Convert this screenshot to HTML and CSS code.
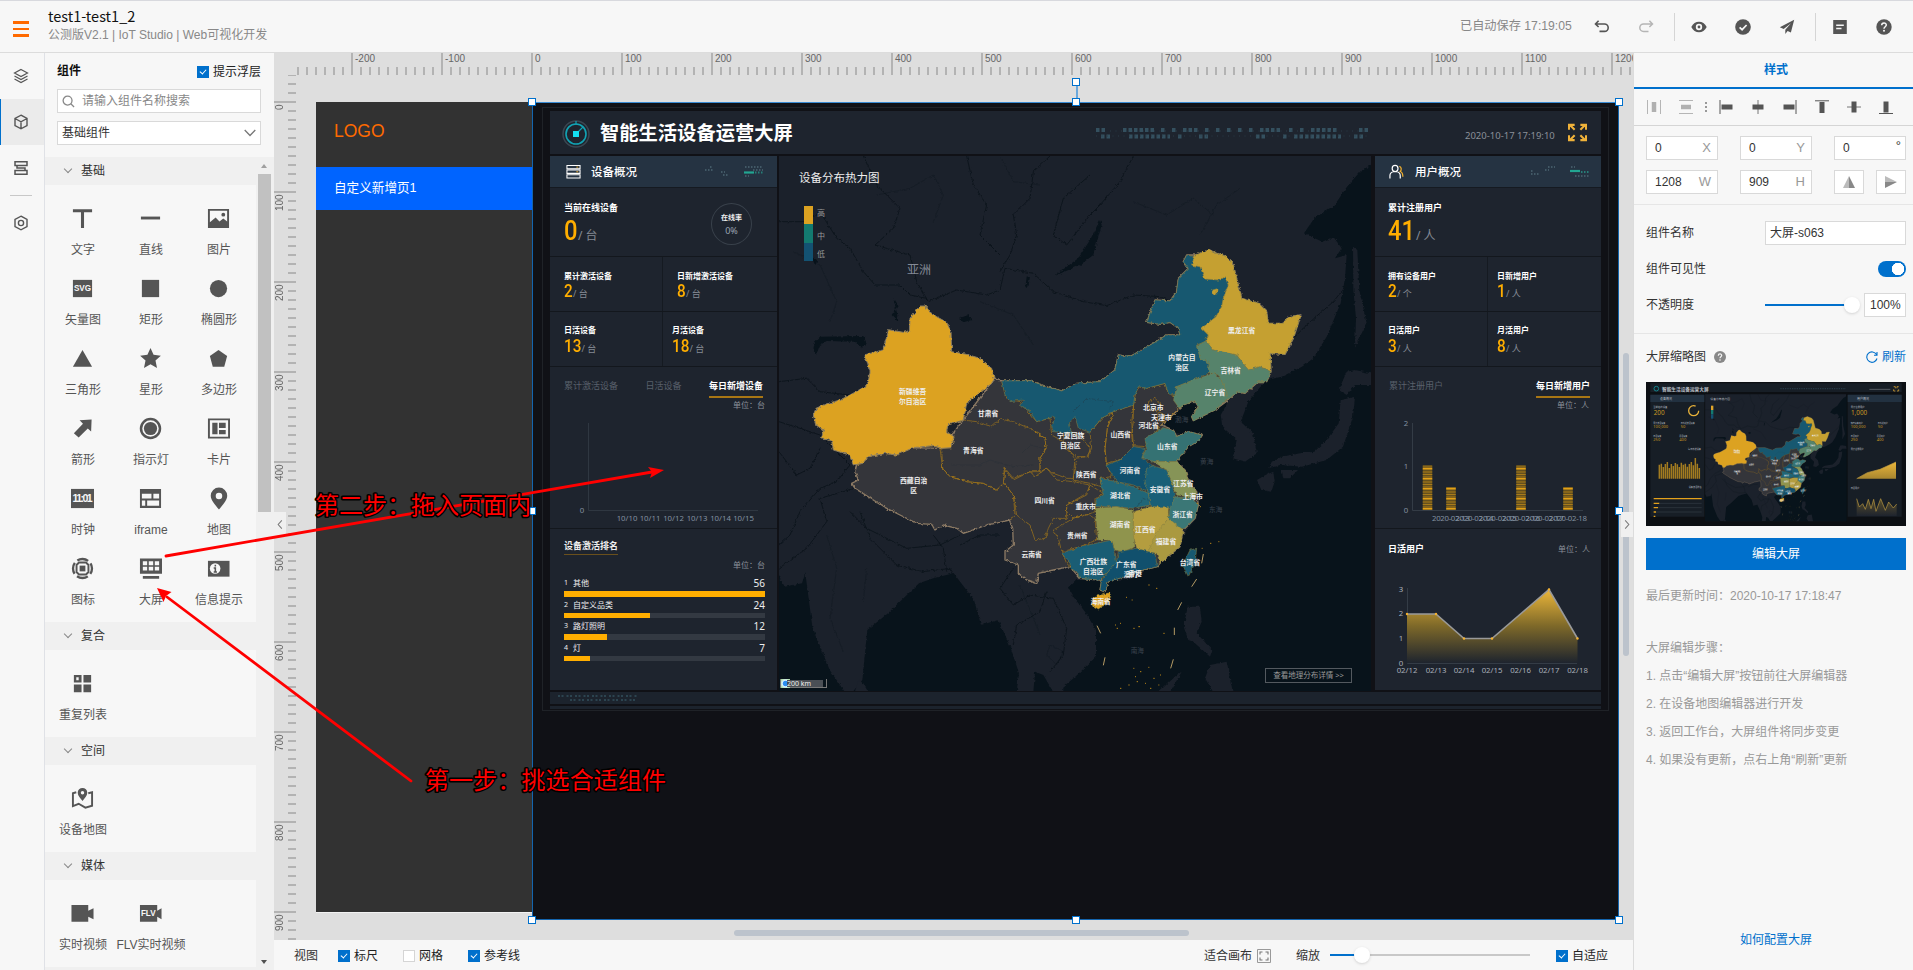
FILE: index.html
```html
<!DOCTYPE html>
<html lang="zh-CN">
<head>
<meta charset="utf-8">
<title>test1-test1_2</title>
<link rel="stylesheet" href="styles.css">
</head>
<body>
<svg class="defs" aria-hidden="true">
  <defs>
    <filter id="rough" x="-5%" y="-5%" width="110%" height="110%" color-interpolation-filters="sRGB"><feTurbulence type="fractalNoise" baseFrequency="0.1" numOctaves="3" seed="4"/><feDisplacementMap in="SourceGraphic" scale="10" xChannelSelector="R" yChannelSelector="G"/></filter>
    <linearGradient id="area" x1="0" y1="0" x2="0" y2="1"><stop offset="0" stop-color="#ebb63a"/><stop offset=".5" stop-color="#7d6829"/><stop offset="1" stop-color="#1e242e"/></linearGradient>
    <g id="terrain">
      <rect x="-63" y="-237" width="1776" height="1605" fill="#1b212b"/>
      <g filter="url(#rough)">
        <path fill="#08131b" d="M1720-215 1680-190 1641-145 1604-90 1543-50 1512-5 1567 20 1600 5 1625 40 1605 70 1640 60 1635 130 1622 205 1580 305 1540 370 1506 395 1445 425 1402 435 1345 475 1290 495 1220 540 1180 555 1195 510 1160 500 1130 530 1085 570 1115 590 1150 600 1205 600 1150 650 1130 680 1160 720 1195 790 1190 850 1155 890 1130 940 1075 985 1000 1030 910 1040 870 1035 830 1035 805 1060 820 1085 855 1130 888 1185 888 1265 826 1325 790 1355 790 1372 1720 1372Z"/>
        <path fill="#08131b" d="M-70 1010-46 1055 6 1045 16 1015 37 1175 89 1305 135 1372H-70ZM160 1372 187 1335 202 1185 264 1135 357 1045 400 1030 461 1015 522 1095 543 1170 595 1155 631 1235 657 1315 650 1372ZM700 1372 705 1310 730 1320 760 1372Z"/>
        <path fill="#08131b" d="M900-45 905-30 880 60 840 90 765 122 780 110 835 70 870 15ZM45 320 60 305 190 303 200 325 185 340 165 320 80 318 60 330 48 360 40 345ZM290 230 280 190 295 210 275 240 295 262ZM680 125 690 123 685 155 676 160ZM478 250 505 240 515 255 490 262ZM35 65 55 80 45 90Z"/>
        <path fill="#1b212b" d="M1402 430 1345 500 1322 560 1359 595 1371 655 1335 680 1298 670 1310 615 1267 575 1262 540 1290 490ZM1665 485 1659 545 1629 635 1580 675 1506 695 1440 690 1408 700 1415 680 1445 665 1500 655 1543 650 1580 615 1616 565 1622 495ZM1396 720 1420 710 1424 740 1414 770 1384 765 1371 735ZM1445 705 1494 705 1470 730 1450 730ZM1616 465 1640 410 1665 405 1713 415 1720 450 1665 450 1640 480ZM1659 35 1672 45 1678 165 1700 265 1665 335 1668 250 1660 165ZM1163 1115 1200 1115 1205 1160 1190 1195 1237 1245 1230 1265 1180 1220 1165 1215 1151 1175ZM1230 1290 1280 1280 1298 1372 1240 1372 1215 1330ZM1075 1372 1130 1320 1145 1310 1110 1372ZM165 1372 175 1335 190 1345 205 1372Z"/>
        <path class="borderline" d="M-63-40 20-40 60-70 110 10 150 40 190 110 225 150 300 150 330 180 380 190 M190-237 230-150 300-80 280-20 225 30 330 60 350 140 385 200 M385 200 470 165 560 180 600 165 615 100 700 115 760 170 850 200 920 212 1000 180 1080 185 1110 198 M500-237 520-150 560-90 540 0 600 60 M750-237 700-190 690-110 640-60 650 0 630 60 600 110 M1000-237 960-160 900-90 870-60 800 30 760 0 790-110 870-180 M1460 330 1520 270 1600 200 1640 150 M-63 440 20 430 60 470 150 480 M-63 560 0 580 60 600 150 690 110 740 60 760 0 830-30 900-63 930 M165 760 60 790 80 860 20 940-63 1000 M150 830 200 880 320 940 420 930 480 900 M180 830 210 910 290 990 370 1010 450 1000 500 1080 540 1150 M400 900 430 940 440 1010 M480 930 540 900 600 900 M640 1000 600 1060 640 1110 690 1080 760 1090 800 1180 790 1260 750 1310 M740 1070 720 1130 650 1170 640 1230 M-63 650-10 720 30 700 60 640"/>
        <path class="borderline faint" d="M-20 50 60 90 110 200 90 260 M230-120 330-140 400-180 430-120 400-40 M600-237 640-160 720-150 M540 200 640 240 700 330 M80 900 110 1000 90 1150 130 1250 M200 1000 190 1100 M1000-100 1100-60 1180-110 1240-60 M1200 0 1250-90 1320-140 M660 1050 720 1200 M750 1230 790 1250 770 1290 740 1260Z"/>
      </g>
      <text class="sea" x="1035" y="494" font-size="24">北京</text>
      <text class="sea" x="1125" y="560" font-size="20">渤海</text>
      <text class="sea" x="1200" y="688" font-size="20">黄海</text>
      <text class="sea" x="1227" y="832" font-size="20">东海</text>
      <text class="sea" x="992" y="1255" font-size="20">南海</text>
    </g>
    <g id="china">
      <g filter="url(#rough)" stroke-linejoin="round">
        <path class="outer" d="M170 690 205 665 340 638 425 640 583 432 605 438 690 437 740 455 785 468 830 445 900 440 945 405 955 360 990 365 1060 325 1100 300 1140 300 1135 280 1110 262 1080 268 1040 262 1065 195 1110 198 1130 170 1135 130 1165 100 1150 80 1160 60 1185 60 1225 45 1280 65 1300 90 1325 190 1375 205 1400 230 1405 265 1450 265 1465 245 1503 240 1480 310 1455 358 1410 355 1413 410 1400 440 1375 440 1335 475 1310 470 1285 495 1245 525 1180 557 1175 545 1195 515 1185 497 1150 510 1085 570 1120 585 1130 605 1165 590 1205 600 1200 615 1165 635 1130 680 1155 705 1168 745 1190 770 1195 810 1185 850 1150 885 1140 935 1110 960 1080 985 1072 995 1030 1005 925 1040 915 1070 900 1065 905 1035 840 1030 810 995 760 1005 715 1015 710 1045 680 1035 655 1015 655 990 615 975 615 950 640 930 638 880 628 855 600 862 560 870 520 885 490 895 470 880 430 870 405 885 395 868 350 865 300 840 250 815 220 795 165 760 155 745 175 735 165 710Z"/>
        <g class="grey">
          <path d="M170 690 188 685 205 665 250 655 290 660 340 638 400 632 420 640 428 700 450 725 500 740 550 745 590 765 612 745 640 780 645 840 628 855"/>
          <path d="M425 640 455 638 462 605 440 590 443 570 490 555 530 560 575 575 600 552 640 560 700 585 735 610 738 640 720 670 720 710 690 710 640 730 615 700 610 745 590 765 550 745 500 740 450 725 428 700Z"/>
          <path d="M605 438 620 490 660 500 675 520 710 560 750 550 755 600 790 620 810 650 830 680 820 730 800 730 760 715 740 700 720 710 720 670 738 640 735 610 700 585"/>
          <path d="M1005 480 1015 455 1040 460 1095 445 1105 475 1125 485 1138 520 1100 555 1085 570 1060 600 1035 635 1000 632 995 560Z"/>
          <path d="M1045 500 1065 490 1085 510 1070 530 1050 525ZM1075 530 1095 540 1090 562 1072 555Z"/>
          <path d="M940 530 1000 510 1000 560 995 600 1000 640 960 675 918 685 915 640 922 580Z"/>
          <path d="M905 550 940 532 922 580 915 640 920 690 935 725 900 730 905 755 870 745 820 735 825 670 860 665 875 640 870 592Z"/>
          <path d="M790 600 815 590 850 615 870 640 865 665 830 665 795 640Z"/>
          <path d="M612 700 640 735 690 710 705 725 740 700 770 735 820 740 870 750 860 780 800 810 800 850 760 850 745 880 735 910 705 915 690 870 650 840 640 780 612 745Z"/>
          <path d="M870 750 910 775 885 790 885 830 860 840 820 850 800 830 800 810 860 775Z"/>
          <path d="M760 885 820 850 860 838 885 850 890 915 840 935 785 950 775 910Z"/>
          <path d="M785 950 800 985 810 995"/>
        </g>
        <path fill="#dca221" stroke="#8a7d62" stroke-width="3" d="M378 213 360 213 352 222 330 250 328 288 310 292 265 284 262 300 248 345 230 350 192 360 203 385 210 410 205 440 195 455 150 480 120 495 75 508 48 520 40 540 48 570 70 585 65 608 95 618 100 645 148 660 160 690 188 685 205 665 250 655 290 660 340 638 400 632 425 640 455 638 462 605 440 590 443 570 490 555 500 505 545 470 575 445 583 432 575 400 540 370 500 358 455 350 453 290 440 262 410 245 385 228Z"/>
        <g class="prov">
          <path fill="#175870" d="M605 438 690 437 740 455 785 468 830 445 900 440 945 405 955 360 990 365 1060 325 1100 300 1140 300 1135 280 1110 262 1080 268 1040 262 1065 195 1110 198 1130 170 1135 130 1165 100 1150 80 1160 60 1185 65 1175 90 1200 95 1215 132 1260 135 1275 125 1285 150 1270 190 1265 215 1248 245 1205 280 1225 300 1215 320 1190 330 1200 370 1228 385 1225 415 1180 435 1130 455 1125 480 1105 475 1095 445 1040 460 1015 455 1005 480 1000 510 940 530 905 550 870 592 835 580 825 545 808 565 815 595 760 590 755 575 765 545 710 560 690 530 660 510 670 495 630 500 615 480Z"/>
          <path fill="#c5a031" d="M1185 60 1225 45 1280 65 1300 90 1325 190 1375 205 1400 230 1405 265 1450 265 1465 245 1503 240 1480 310 1455 358 1410 355 1413 410 1380 395 1345 405 1310 360 1240 345 1218 318 1225 300 1205 280 1248 245 1265 215 1270 190 1285 150 1275 125 1260 135 1215 132 1200 95 1175 90ZM1235 166 1251 161 1251 177 1237 179Z"/>
          <path fill="#56836b" d="M1190 332 1218 318 1240 345 1310 360 1345 405 1380 395 1413 410 1400 440 1375 440 1335 475 1310 470 1285 495 1270 450 1255 420 1225 412 1228 385 1200 370Z"/>
          <path fill="#56836b" d="M1125 480 1130 455 1180 435 1240 415 1255 425 1272 450 1285 492 1245 525 1180 557 1175 545 1195 515 1185 497 1150 510 1138 520 1120 495Z"/>
          <path fill="#357273" d="M1035 610 1090 578 1120 585 1130 605 1165 590 1205 600 1200 615 1165 635 1130 680 1060 680 1025 668 1040 640Z"/>
          <path fill="#11506d" d="M1000 635 1035 640 1025 670 1060 690 1040 720 1045 770 1000 750 950 740 918 690 960 675Z"/>
          <path fill="#869457" d="M1060 680 1130 680 1155 705 1168 745 1190 770 1185 790 1130 780 1115 740 1100 705Z"/>
          <path fill="#195f77" d="M1040 700 1060 692 1100 705 1115 740 1125 785 1115 820 1080 825 1050 810 1045 775 1035 740Z"/>
          <path fill="#206678" d="M900 730 950 740 1000 755 1045 775 1050 810 1000 820 950 815 885 815 890 790 910 780Z"/>
          <path fill="#3b7776" d="M1125 785 1175 790 1195 810 1185 850 1155 880 1120 885 1105 850 1110 820Z"/>
          <path fill="#8f944d" d="M885 820 950 815 1000 825 1000 880 1005 935 970 950 945 945 935 915 895 915 890 870Z"/>
          <path fill="#b49d3f" d="M1000 830 1050 815 1105 815 1105 850 1065 905 1050 955 1010 940 1000 900Z"/>
          <path fill="#aa9940" d="M1105 850 1150 885 1140 935 1110 960 1080 985 1070 955 1045 950 1065 900Z"/>
          <path fill="#1a5d74" d="M785 955 840 935 935 915 945 950 950 985 925 1010 900 1035 840 1030 830 1010 810 1000 810 985Z"/>
          <path fill="#11506d" d="M955 950 1010 940 1065 955 1072 995 1030 1005 990 1020 925 1040 915 1070 900 1065 905 1035 925 1010 950 980Z"/>
          <path fill="#dca221" d="M880 1085 930 1073 932 1085 920 1105 895 1122 875 1110Z"/>
          <path fill="#175870" d="M1170 945 1190 940 1185 985 1165 1025 1148 990Z"/>
        </g>
        <path class="river" d="M455 690 540 690 570 675 640 695 700 690 M820 530 860 490 940 500 930 520 M660 660 690 630 730 640 M1000 830 1030 790 1050 800"/>
      </g>
      <path class="dash" d="M1210 957 1205 985M1190 1032 1175 1055M1145 1102 1133 1125M1123 1178V1200M891 1172 902 1195M915 1267 910 1291M1120 1273 1112 1300"/>
      <path class="dots" d="M945 1170h3M960 1165h3M950 1180h4M1000 1180h4M1015 1175h5M1045 1050h4M1068 1060h4M995 1095h3M978 1087h3M1090 1195h4M1230 925h4M1255 920h3M1205 940h3M1000 1300h3M1020 1310h4M1045 1297h3M1060 1330h4M1010 1340h4M1035 1345h3M985 1350h4M1080 1320h3M1075 1350h3M960 1360h4M1050 1360h4M1005 1325h3M1190 805h4M1200 815h3"/>
      <g class="lab">
        <text x="338" y="476">新疆维吾</text><text x="338" y="507">尔自治区</text><text x="564" y="544">甘肃省</text><text x="520" y="655">青海省</text><text x="341" y="744">西藏自治</text><text x="341" y="774">区</text><text x="734" y="804">四川省</text><text x="812" y="609">宁夏回族</text><text x="811" y="639">自治区</text><text x="859" y="725">陕西省</text><text x="962" y="606">山西省</text><text x="1060" y="525">北京市</text><text x="1084" y="555">天津市</text><text x="1046" y="579">河北省</text><text x="1102" y="641">山东省</text><text x="990" y="714">河南省</text><text x="1080" y="771">安徽省</text><text x="1150" y="754">江苏省</text><text x="1178" y="793">上海市</text><text x="961" y="790">湖北省</text><text x="857" y="822">重庆市</text><text x="1148" y="846">浙江省</text><text x="960" y="876">湖南省</text><text x="1036" y="890">江西省</text><text x="1098" y="928">福建省</text><text x="832" y="908">贵州省</text><text x="695" y="965">云南省</text><text x="880" y="987">广西壮族</text><text x="880" y="1017">自治区</text><text x="979" y="995">广东省</text><text x="992" y="1027">澳门</text><text x="1005" y="1024">香港</text><text x="902" y="1106">海南省</text><text x="1170" y="989">台湾省</text><text x="1325" y="293">黑龙江省</text><text x="1146" y="375">内蒙古自</text><text x="1146" y="406">治区</text><text x="1292" y="414">吉林省</text><text x="1245" y="479">辽宁省</text>
      </g>
    </g>
  </defs>
</svg>

<header class="topbar">
  <div class="burger"><i></i><i></i><i></i></div>
  <div class="titles"><div class="name">test1-test1_2</div><div class="sub">公测版V2.1 | IoT Studio | Web可视化开发</div></div>
  <div class="tools">
    <span class="saved">已自动保存 17:19:05</span>
    <svg class="tool" viewBox="0 0 16 16"><path d="M1.500 5H10.500a3.700 3.700 0 0 1 0 7.400H5.500M4.600 1.800 1.500 5l3.100 3" fill="none" stroke="#555" stroke-width="1.600"/></svg>
    <svg class="tool" viewBox="0 0 16 16"><path d="M14.500 5H5.500a3.700 3.700 0 0 0 0 7.400H10.500M11.400 1.800 14.500 5l-3.100 3" fill="none" stroke="#b5b5b5" stroke-width="1.500"/></svg>
    <i class="sep"></i>
    <svg class="tool" viewBox="0 0 16 16"><path fill="#555" fill-rule="evenodd" d="M.3 8C2 4.500 4.800 2.800 8 2.800S14 4.500 15.700 8C14 11.500 11.200 13.200 8 13.200S2 11.500.3 8ZM8 4.800a3.200 3.200 0 1 0 0 6.400 3.200 3.200 0 0 0 0-6.400Z"/><circle cx="8" cy="8" r="1.400" fill="#555"/></svg>
    <svg class="tool" viewBox="0 0 16 16"><circle cx="8" cy="8" r="7.800" fill="#555"/><path d="M4.600 8.300 7.100 10.700 11.600 6" fill="none" stroke="#f7f7f7" stroke-width="1.700"/></svg>
    <svg class="tool" viewBox="0 0 16 16"><path fill="#555" d="M15.200.8.8 8.200 4.700 10 12 4.200 6.300 10.700V15L8.600 12 11.900 13.400Z"/></svg>
    <i class="sep"></i>
    <svg class="tool" viewBox="0 0 16 16"><path fill="#555" d="M1.200 1H14.800V15H1.200Z"/><path d="M4.200 6.200H11.800M4.200 9.500H9.500" stroke="#f7f7f7" stroke-width="1.400"/></svg>
    <svg class="tool" viewBox="0 0 16 16"><circle cx="8" cy="8" r="7.700" fill="#555"/><path d="M5.700 6.300C5.700 3.200 10.300 3.200 10.300 6.100 10.300 7.700 8 7.800 8 9.700" fill="none" stroke="#f7f7f7" stroke-width="1.500"/><circle cx="8" cy="11.800" r="1" fill="#f7f7f7"/></svg>
  </div>
</header>

<main class="main">
  <nav class="rail">
    <div class="rail-item"><svg viewBox="0 0 16 16"><path d="M8 1.500 14.500 5 8 8.500 1.500 5ZM1.500 8 8 11.500 14.500 8M1.500 11 8 14.500 14.500 11" fill="none" stroke="#555" stroke-width="1.200"/></svg></div>
    <div class="rail-item on"><svg viewBox="0 0 16 16"><path d="M8 1.200 14 4.500V11.500L8 14.800 2 11.500V4.500ZM2 4.500 8 7.800 14 4.500M8 7.800V14.800" fill="none" stroke="#555" stroke-width="1.400"/></svg></div>
    <div class="rail-item"><svg viewBox="0 0 16 16"><path d="M2 1.800H14V5.400H2ZM2 10.600H14V14.200H2ZM4 5.400V8H12V10.600" fill="none" stroke="#555" stroke-width="1.500"/></svg></div>
    <i class="rail-line"></i>
    <div class="rail-item last"><svg viewBox="0 0 16 16"><path d="M8 1.200 14 4.500V11.500L8 14.800 2 11.500V4.500Z" fill="none" stroke="#555" stroke-width="1.400"/><circle cx="8" cy="8" r="2.600" fill="none" stroke="#555" stroke-width="1.400"/></svg></div>
  </nav>

  <aside class="comps">
    <div class="comps-top">
      <div class="comps-title"><b>组件</b><label><i class="cb on"></i>提示浮层</label></div>
      <div class="field search"><svg viewBox="0 0 14 14"><circle cx="6" cy="6" r="4.800" fill="none" stroke="#888" stroke-width="1.400"/><path d="M9.500 9.500 13 13" stroke="#888" stroke-width="1.400"/></svg><span>请输入组件名称搜索</span></div>
      <div class="field select"><span>基础组件</span><svg viewBox="0 0 12 8"><path d="M.7 1 6 6.500 11.300 1" fill="none" stroke="#777" stroke-width="1.300"/></svg></div>
    </div>
    <div class="scroll">
      <div class="list">
        <h4><i></i>基础</h4>
        <div class="grid">
          <div><svg viewBox="0 0 24 24"><path d="M2 4H22M12 4V22" stroke="#555" stroke-width="3.200"/></svg>文字</div>
          <div><svg viewBox="0 0 24 24"><path d="M2 11.500H22" stroke="#555" stroke-width="3"/></svg>直线</div>
          <div><svg viewBox="0 0 24 24"><path fill="#555" fill-rule="evenodd" d="M1 2H23V22H1ZM3 4V16L9 11 13 15 17 12 21 15V4Z"/><circle cx="17" cy="8" r="2" fill="#555"/></svg>图片</div>
          <div><svg viewBox="0 0 24 24"><path fill="#555" d="M2 3H22V21H2Z"/><text x="12" y="15" class="glyph" font-size="8.500">SVG</text></svg>矢量图</div>
          <div><svg viewBox="0 0 24 24"><path fill="#555" d="M3 3H21V21H3Z"/></svg>矩形</div>
          <div><svg viewBox="0 0 24 24"><circle cx="12" cy="12" r="9" fill="#555"/></svg>椭圆形</div>
          <div><svg viewBox="0 0 24 24"><path fill="#555" d="M12 3 22 20.500H2Z"/></svg>三角形</div>
          <div><svg viewBox="0 0 24 24"><path fill="#555" d="M12 1 15.200 8.200 22.800 9 17.200 14.200 18.800 22 12 18 5.200 22 6.800 14.200 1.200 9 8.800 8.200Z"/></svg>星形</div>
          <div><svg viewBox="0 0 24 24"><path fill="#555" d="M12 3 21 9.500 18 20.500H6L3 9.500Z"/></svg>多边形</div>
          <div><svg viewBox="0 0 24 24"><path fill="#555" d="M9 3.500 21.500 2.500 21 15 17.500 12 8 21.500 3 17 12.500 7Z"/></svg>箭形</div>
          <div><svg viewBox="0 0 24 24"><circle cx="12" cy="12" r="9.900" fill="none" stroke="#555" stroke-width="2.600"/><circle cx="12" cy="12" r="6.900" fill="#555"/></svg>指示灯</div>
          <div><svg viewBox="0 0 24 24"><path d="M2 2.500H23V21.500H2Z" fill="none" stroke="#555" stroke-width="2"/><path fill="#555" d="M5.500 6H11V18H5.500ZM12.500 6H19.500V11.500H12.500ZM12.500 13.500H19.500V18H12.500Z"/></svg>卡片</div>
          <div><svg viewBox="0 0 24 24"><path fill="#555" d="M0 2H24V22H0Z"/><text x="12" y="16" class="glyph" font-size="11" textLength="21">11:01</text></svg>时钟</div>
          <div><svg viewBox="0 0 24 24"><path fill="#555" fill-rule="evenodd" d="M1 2H23V22H1ZM3 7V12H13V7ZM15 7V12H21V7ZM3 14V19.500H6.500V14ZM8.500 14V19.500H21V14Z"/></svg>iframe</div>
          <div><svg viewBox="0 0 24 24"><path fill="#555" fill-rule="evenodd" d="M12.500.5a8.600 8.600 0 0 1 8.600 8.600C21.100 14 16 19 12.500 23.500 9 19 3.900 14 3.900 9.100A8.600 8.600 0 0 1 12.500.5Zm0 5.400a3.400 3.400 0 1 0 0 6.800 3.400 3.400 0 0 0 0-6.800Z"/></svg>地图</div>
          <div><svg viewBox="0 0 24 24"><circle cx="12" cy="12" r="9.900" fill="none" stroke="#555" stroke-width="2.400" stroke-dasharray="12 3.550" stroke-dashoffset="6"/><path d="M8.300 5.800H15.700L18.200 8.300V15.700L15.700 18.200H8.300L5.800 15.700V8.300Z" fill="none" stroke="#555" stroke-width="2"/><path fill="#555" d="M9 9H15V15H9Z"/></svg>图标</div>
          <div><svg viewBox="0 0 24 24"><path fill="#555" fill-rule="evenodd" d="M1 1.500H24V17.500H1ZM4 4.500V8.500H8.500V4.500ZM10.200 4.500V8.500H14.800V4.500ZM16.500 4.500V8.500H21V4.500ZM4 10.300V14H8.500V10.300ZM10.200 10.300V14H14.800V10.300ZM16.500 10.300V14H21V10.300ZM4 19.800H21V22.800H4Z"/></svg>大屏</div>
          <div><svg viewBox="0 0 24 24"><path fill="#555" d="M1 4H23.500V20.500H1Z"/><circle cx="8.500" cy="12" r="5.500" fill="#f7f7f7"/><path d="M8.700 8V10M7 11.500H8.700V15.500M7 15.700H10.400" stroke="#555" stroke-width="1.600" fill="none"/></svg>信息提示</div>
        </div>
        <h4><i></i>复合</h4>
        <div class="grid"><div><svg viewBox="0 0 24 24"><path fill="#555" fill-rule="evenodd" d="M3 3H11V11H3ZM5.500 5.500V8.500H8V5.500ZM13 3H21V11H13ZM3 13H11V21H3ZM13 13H21V21H13Z"/></svg>重复列表</div></div>
        <h4><i></i>空间</h4>
        <div class="grid"><div><svg viewBox="0 0 24 24"><path d="M5.500 5.500 2 6.500V20L8 17.500 15 21.500 22 19.500V5.500L18 6.500" fill="none" stroke="#555" stroke-width="2"/><path fill="#555" fill-rule="evenodd" d="M12 1a5 5 0 0 1 5 5C17 9 14 12 12 14.500 10 12 7 9 7 6a5 5 0 0 1 5-5Zm0 3.200a1.800 1.800 0 1 0 0 3.600 1.800 1.800 0 0 0 0-3.600Z"/></svg>设备地图</div></div>
        <h4><i></i>媒体</h4>
        <div class="grid"><div><svg viewBox="0 0 24 24"><path fill="#555" d="M.5 3H18V9L23.500 6.500V18L18 15.500V20.500H.5Z"/></svg>实时视频</div><div><svg viewBox="0 0 24 24"><path fill="#555" d="M1 3H19V9L23.500 6.500V18L19 15.500V20.500H1Z"/><text x="9.700" y="15" class="glyph" font-size="8.500">FLV</text></svg>FLV实时视频</div></div>
        <h4><i></i></h4>
      </div>
      <div class="bar"><i class="up"></i><i class="thumb"></i><i class="down"></i></div>
    </div>
  </aside>

  <section class="work">
    <div class="hruler"><div class="hlabels"><span>-200</span><span>-100</span><span>0</span><span>100</span><span>200</span><span>300</span><span>400</span><span>500</span><span>600</span><span>700</span><span>800</span><span>900</span><span>1000</span><span>1100</span><span>1200</span></div></div>
    <div class="work-row">
      <div class="vruler"><span>0</span><span>100</span><span>200</span><span>300</span><span>400</span><span>500</span><span>600</span><span>700</span><span>800</span><span>900</span></div>
      <div class="canvas">
        <div class="page"><div class="logo">LOGO</div><div class="menu">自定义新增页1</div></div>
        <div class="stage">
          <div class="dash-head">
            <svg class="radar" viewBox="0 0 28 28"><circle cx="14" cy="14" r="13" fill="none" stroke="#3a4752" stroke-width="1.500"/><circle cx="14" cy="14" r="10" fill="none" stroke="#12a3b4" stroke-width="1.600"/><path d="M16 12 21 7M14 1V5" stroke="#12a3b4" stroke-width="1.200"/><path fill="#14dff2" d="M11 11H17V17H11Z"/></svg>
            <strong>智能生活设备运营大屏</strong>
            <svg class="matrix" viewBox="0 0 272 12"><path d="M0 3H9M27 3H58M65 3H69M76 3H80M87 3H102M109 3H113M120 3H124M131 3H135M142 3H146M153 3H157M164 3H185M193 3H197M204 3H208M215 3H242M263 3H272" stroke="#34505f" stroke-width="4" stroke-dasharray="3.500 2"/><path d="M5 9.500H14M33 9.500H74M82 9.500H86M103 9.500H112M160 9.500H169M187 9.500H191M198 9.500H245M258 9.500H267" stroke="#34505f" stroke-width="4" stroke-dasharray="3.500 2"/><path d="M14 4H272M0 9H272" stroke="#2a3b47" stroke-width="1" stroke-dasharray="1 4.500"/></svg>
            <time>2020-10-17 17:19:10</time>
            <svg class="full" viewBox="0 0 20 20"><path d="M1 7V2H7M2 2 7 7M13 2H19V7M18 2 13 7M1 13V18H7M2 18 7 13M13 18H19V13M18 18 13 13" fill="none" stroke="#f0b23a" stroke-width="2.200"/></svg>
          </div>
          <div class="dash-body">
            <div class="pan">
              <div class="pan-head"><svg viewBox="0 0 16 16"><path d="M1 1.500H15V5H1ZM1 6.500H15V10H1ZM1 11.500H15V15H1Z" fill="none" stroke="#fff" stroke-width="1.100"/><path d="M11 3.300H13M11 8.300H13" stroke="#f5b22f"/></svg><span>设备概况</span><svg class="deco" viewBox="0 0 58 12"><path d="M0 4H8M5 1H8M16 6H20M18 9H24M40 1H58M48 4H58M40 10H44" stroke="#4c6773" stroke-width="1.500" stroke-dasharray="1.500 1.500"/><path d="M39 6.500H49" stroke="#22a692" stroke-width="2.200"/><path d="M50 6.500H58" stroke="#277f78" stroke-width="2" stroke-dasharray="1.500 1.500"/></svg></div>
              <div class="sec hero"><div class="stat"><p>当前在线设备</p><div class="val"><b>0</b><em>/ 台</em></div></div><div class="ring"><span>在线率</span><small>0%</small></div></div>
              <div class="sec pair"><div class="stat"><p>累计激活设备</p><div class="val"><b>2</b><em>/ 台</em></div></div><div class="stat"><p>日新增激活设备</p><div class="val"><b>8</b><em>/ 台</em></div></div></div>
              <div class="sec pair low"><div class="stat"><p>日活设备</p><div class="val two"><b>13</b><em>/ 台</em></div></div><div class="stat near"><p>月活设备</p><div class="val two"><b>18</b><em>/ 台</em></div></div></div>
              <div class="sec chart">
                <div class="tabs"><span>累计激活设备</span><span>日活设备</span><span class="on">每日新增设备</span></div>
                <div class="unit">单位：台</div>
                <svg class="plot" viewBox="0 0 227 116"><path d="M38.500 11V98.500H208" fill="none" stroke="#2f3741"/><g class="ax"><text x="32" y="101">0</text><text x="77" y="109">10/10</text><text x="100" y="109">10/11</text><text x="123.500" y="109">10/12</text><text x="147" y="109">10/13</text><text x="170.500" y="109">10/14</text><text x="193.500" y="109">10/15</text></g></svg>
              </div>
              <div class="sec rank">
                <h5>设备激活排名</h5><div class="unit">单位：台</div>
                <div class="rk"><small>1</small><span>其他</span><b>56</b></div><div class="track"><i style="width:100%"></i></div>
                <div class="rk"><small>2</small><span>自定义品类</span><b>24</b></div><div class="track"><i style="width:43%"></i></div>
                <div class="rk"><small>3</small><span>路灯照明</span><b>12</b></div><div class="track"><i style="width:21.500%"></i></div>
                <div class="rk"><small>4</small><span>灯</span><b>7</b></div><div class="track"><i style="width:12.800%"></i></div>
              </div>
            </div>

            <div class="map">
              <svg class="mapsvg" viewBox="-63 -237 1776 1605" preserveAspectRatio="none"><use href="#terrain"/><text class="asia" x="321" y="118">亚洲</text><use href="#china"/></svg>
              <div class="map-title">设备分布热力图</div>
              <div class="legend"><i></i><div><span>高</span><span>中</span><span>低</span></div></div>
              <div class="scale"><i></i><span>200 km</span></div>
              <div class="more">查看地理分布详情 &gt;&gt;</div>
            </div>

            <div class="pan right">
              <div class="pan-head"><svg viewBox="0 0 16 16"><path d="M6.500 1.500a3 3.200 0 1 1 0 6.600 3 3.200 0 1 1 0-6.600ZM1 15.500V12.500C1 9.500 3 8.500 5 8M8 8C10 8.500 12 9.500 12 12.500V15.500" fill="none" stroke="#fff" stroke-width="1.300"/><path d="M11 2.500C13.500 3 13.500 6.500 12 8 14 8.800 14.800 10 14.800 13.500" fill="none" stroke="#f5b22f" stroke-width="1.300"/></svg><span>用户概况</span><svg class="deco" viewBox="0 0 58 12"><path d="M0 5H2M0 8H8M14 4H18M17 1H24M40 1H44M44 10H58" stroke="#4c6773" stroke-width="1.500" stroke-dasharray="1.500 1.500"/><path d="M39 5H49" stroke="#22a692" stroke-width="2.200"/><path d="M50 6H58" stroke="#277f78" stroke-width="2" stroke-dasharray="1.500 1.500"/></svg></div>
              <div class="sec hero"><div class="stat"><p>累计注册用户</p><div class="val two"><b>41</b><em>/ 人</em></div></div></div>
              <div class="sec pair"><div class="stat"><p>拥有设备用户</p><div class="val"><b>2</b><em>/ 个</em></div></div><div class="stat near"><p>日新增用户</p><div class="val"><b>1</b><em>/ 人</em></div></div></div>
              <div class="sec pair low"><div class="stat"><p>日活用户</p><div class="val"><b>3</b><em>/ 人</em></div></div><div class="stat near"><p>月活用户</p><div class="val"><b>8</b><em>/ 人</em></div></div></div>
              <div class="sec chart">
                <div class="tabs"><span>累计注册用户</span><span class="on">每日新增用户</span></div>
                <div class="unit">单位：人</div>
                <svg class="plot" viewBox="0 0 226 116"><path d="M37.500 11V98.500H208" fill="none" stroke="#343c46"/><path d="M52.500 98V53M76 98V75M146 98V53M193 98V75" stroke="#65501e" stroke-width="9.500"/><path d="M52.500 98V53M76 98V75M146 98V53M193 98V75" stroke="#a87b19" stroke-width="9.500" stroke-dasharray="1 1.500"/><path d="M52.500 98V53M76 98V75M146 98V53M193 98V75" stroke="#e2a017" stroke-width="9.500" stroke-dasharray="1 9" stroke-dashoffset="-1"/><g class="ax"><text x="31" y="14">2</text><text x="31" y="57">1</text><text x="31" y="101">0</text><text x="76" y="109" textLength="38">2020-02-13</text><text x="99.400" y="109" textLength="38">2020-02-14</text><text x="122.800" y="109" textLength="38">2020-02-15</text><text x="146.200" y="109" textLength="38">2020-02-16</text><text x="169.600" y="109" textLength="38">2020-02-17</text><text x="193" y="109" textLength="38">2020-02-18</text></g></svg>
              </div>
              <div class="sec active">
                <div class="active-head"><b>日活用户</b><span>单位：人</span></div>
                <svg class="plot" viewBox="0 0 226 116"><path d="M32.500 13V88.500H202" fill="none" stroke="#343c46"/><path fill="url(#area)" d="M32 39H61L89 63.500H117L174 14.500 202.500 63.500V88H32Z"/><path d="M32 39H61L89 63.500H117L174 14.500 202.500 63.500" fill="none" stroke="#999" stroke-width="1.600"/><g fill="#f5b22f"><circle cx="32" cy="39" r="1.200"/><circle cx="61" cy="39" r="1.200"/><circle cx="89" cy="63.500" r="1.200"/><circle cx="117" cy="63.500" r="1.200"/><circle cx="174" cy="14.500" r="1.200"/><circle cx="202.500" cy="63.500" r="1.200"/></g><g class="ax lite"><text x="26" y="16.500">3</text><text x="26" y="41">2</text><text x="26" y="66">1</text><text x="26" y="90.500">0</text><text x="32" y="98">02/12</text><text x="61" y="98">02/13</text><text x="89" y="98">02/14</text><text x="117" y="98">02/15</text><text x="145.500" y="98">02/16</text><text x="174" y="98">02/17</text><text x="202.500" y="98">02/18</text></g></svg>
              </div>
            </div>
          </div>
          <div class="dash-foot"><svg viewBox="0 0 80 8"><path d="M0 2H80M12 6H80" stroke="#2c4450" stroke-width="2" stroke-dasharray="2 1.500 2 3"/></svg></div>
          <i class="foot-line"></i>
          <i class="rot"></i>
          <i class="hd h0"></i><i class="hd h1"></i><i class="hd h2"></i><i class="hd h3"></i><i class="hd h4"></i><i class="hd h5"></i><i class="hd h6"></i><i class="hd h7"></i><i class="hd h8"></i>
        </div>
        <i class="hscroll"></i><i class="vscroll"></i>
      </div>
    </div>
    <i class="fold l"><svg viewBox="0 0 8 12"><path d="M6 1.500 2 6 6 10.500" fill="none" stroke="#777" stroke-width="1.100"/></svg></i>
    <i class="fold r"><svg viewBox="0 0 8 12"><path d="M2 1.500 6 6 2 10.500" fill="none" stroke="#777" stroke-width="1.100"/></svg></i>
    <footer class="status">
      <span class="view">视图</span>
      <label><i class="cb on"></i>标尺</label><label><i class="cb"></i>网格</label><label><i class="cb on"></i>参考线</label>
      <span class="fit">适合画布<svg viewBox="0 0 14 14"><path d="M.5.5H13.500V13.500H.5Z" fill="none" stroke="#999"/><path d="M3 5.500V3H5.500M8.500 3H11V5.500M11 8.500V11H8.500M5.500 11H3V8.500" fill="none" stroke="#777" stroke-width="1.100"/></svg></span>
      <span class="zoomlab">缩放</span><span class="zoombar"><i></i></span>
      <label class="auto"><i class="cb on"></i>自适应</label>
    </footer>
  </section>

  <aside class="style">
    <div class="style-tab">样式</div>
    <div class="aligns">
      <svg viewBox="0 0 14 14"><path d="M.5 0V14M13.500 0V14" stroke="#b5b5b5"/><path d="M7 2V12" stroke="#b0b0b0" stroke-width="4.500"/></svg>
      <svg viewBox="0 0 14 14"><path d="M0 .5H14M0 13.500H14" stroke="#b5b5b5"/><path d="M2 7H12" stroke="#b0b0b0" stroke-width="4.500"/></svg>
      <i></i>
      <svg viewBox="0 0 14 14"><path d="M1 0V14" stroke="#555"/><path d="M2.500 7H13.500" stroke="#555" stroke-width="5"/></svg>
      <svg viewBox="0 0 14 14"><path d="M7 0V14" stroke="#777"/><path d="M1.500 7H12.500" stroke="#555" stroke-width="5"/></svg>
      <svg viewBox="0 0 14 14"><path d="M13 0V14" stroke="#555"/><path d="M.5 7H11.500" stroke="#555" stroke-width="5"/></svg>
      <svg viewBox="0 0 14 14"><path d="M0 .8H14" stroke="#555"/><path d="M7 2V13" stroke="#555" stroke-width="5"/></svg>
      <svg viewBox="0 0 14 14"><path d="M0 7H14" stroke="#777"/><path d="M7 1.500V12.500" stroke="#555" stroke-width="5"/></svg>
      <svg viewBox="0 0 14 14"><path d="M0 13.500H14" stroke="#555"/><path d="M7 1.500V12.500" stroke="#555" stroke-width="5"/></svg>
    </div>
    <div class="dims">
      <div class="in">0<em>X</em></div><div class="in">0<em>Y</em></div><div class="in">0<em class="deg">°</em></div>
      <div class="in">1208<em>W</em></div><div class="in">909<em>H</em></div>
      <div class="flips"><div class="in"><svg viewBox="0 0 12 12"><path fill="#bbb" d="M6 0V12H0Z"/><path fill="#888" d="M6 0 12 12H6Z"/></svg></div><div class="in"><svg viewBox="0 0 12 12"><path fill="#bbb" d="M0 0 12 6H0Z"/><path fill="#888" d="M0 6H12L0 12Z"/></svg></div></div>
    </div>
    <div class="props">
      <div class="row"><span>组件名称</span><div class="in wide">大屏-s063</div></div>
      <div class="row"><span>组件可见性</span><i class="switch"></i></div>
      <div class="row"><span>不透明度</span><div class="op"><i></i></div><div class="in pct">100%</div></div>
    </div>
    <div class="thumbs">
      <div class="thumb-head"><span>大屏缩略图</span><svg viewBox="0 0 12 12"><circle cx="6" cy="6" r="6" fill="#888"/><path d="M4.300 4.700C4.300 2.400 7.700 2.400 7.700 4.600 7.700 5.800 6 5.900 6 7.200" fill="none" stroke="#f7f7f7" stroke-width="1.200"/><circle cx="6" cy="9" r=".8" fill="#f7f7f7"/></svg><a><svg viewBox="0 0 12 12"><path d="M11 7.500A5.200 5.200 0 1 1 10.500 3.500M11 1V4.200H8" fill="none" stroke="#0070cc" stroke-width="1.100"/></svg>刷新</a></div>
      <svg class="thumbnail" viewBox="0 0 780 432">
        <rect width="780" height="432" fill="#0c0f13"/><path fill="#171e26" d="M13 4H767V30H13ZM13 38H175V404H13ZM605 38H767V404H605Z"/>
        <clipPath id="tc"><path d="M177 36H603V418H177Z"/></clipPath>
        <g clip-path="url(#tc)"><g transform="translate(192.500 93) scale(.238)"><use href="#terrain"/><use href="#china"/></g></g>
        <path fill="#223140" d="M13 38H175V60H13ZM605 38H767V60H605Z"/><circle cx="31" cy="20" r="7" fill="none" stroke="#14838c" stroke-width="3"/>
        <g class="tt"><text x="48" y="26" font-size="14" font-weight="bold">智能生活设备运营大屏</text><text x="42" y="53" font-size="9">设备概况</text><text x="633" y="53" font-size="9">用户概况</text><text x="193" y="55" font-size="8.500">设备分布热力图</text><text x="22" y="77" font-size="7">当前在线设备</text><text x="614" y="77" font-size="7">累计注册用户</text><text x="22" y="125" font-size="6">累计激活设备</text><text x="104" y="125" font-size="6">日新增激活设备</text><text x="22" y="164" font-size="6">日活设备</text><text x="100" y="164" font-size="6">月活设备</text><text x="614" y="125" font-size="6">拥有设备用户</text><text x="695" y="125" font-size="6">日新增用户</text><text x="614" y="164" font-size="6">日活用户</text><text x="692" y="164" font-size="6">月活用户</text><text x="126" y="203" font-size="6.500">每日新增设备</text><text x="614" y="203" font-size="6.500">累计注册用户</text><text x="128" y="317" font-size="6.500">设备激活排名</text><text x="614" y="320" font-size="6.500">日活用户</text></g>
        <g class="ty"><text x="23" y="99" font-size="19">200</text><text x="22" y="138" font-size="12">100,000</text><text x="104" y="138" font-size="12">50</text><text x="22" y="178" font-size="12">250</text><text x="100" y="178" font-size="12">400</text><text x="615" y="100" font-size="19">1,000</text><text x="614" y="138" font-size="12">100,000</text><text x="696" y="138" font-size="12">50</text><text x="614" y="178" font-size="12">250</text><text x="692" y="178" font-size="12">400</text></g>
        <circle cx="143" cy="86" r="15" fill="none" stroke="#e8b23a" stroke-width="4" stroke-dasharray="75 20"/>
        <path fill="#e0a52a" d="M195 71H202V84H195Z"/><path fill="#137a70" d="M195 84H202V97H195Z"/><path fill="#135272" d="M195 97H202V110H195Z"/>
        <path d="M40 248V290M46 245V290M52 255V290M58 246V290M64 240V290M70 258V290M76 246V290M82 252V290M88 243V290M94 247V290M100 255V290M106 242V290M112 248V290M118 245V290M124 254V290M130 246V290M136 240V290M142 250V290M148 228V290M154 245V290M160 258V290" stroke="#a27b20" stroke-width="4.500"/>
        <path d="M23 350H167M23 364H40M23 377H36M23 390H30M23 403H28" stroke="#e2a11c" stroke-width="4"/><path d="M40 364H167M36 377H167M30 390H167" stroke="#343c46" stroke-width="2"/>
        <path fill="url(#area)" d="M632 290 664 272 702 262 750 240V290ZM632 402V350L640 375 650 365 658 382 667 352 675 380 683 352 690 388 704 350 718 385 728 360 742 378 752 366V402Z"/><path d="M632 290 664 272 702 262 750 240M632 350 640 375 650 365 658 382 667 352 675 380 683 352 690 388 704 350 718 385 728 360 742 378 752 366" fill="none" stroke="#bd9a43" stroke-width="2"/>
        <path d="M743 14H748V19M753 19V14H758M743 22V27H748M758 22V27H753" stroke="#b58a30" stroke-width="3" fill="none"/><path d="M403 20H600" stroke="#273845" stroke-width="4" stroke-dasharray="4 3"/><path d="M670 22H733" stroke="#565b62" stroke-width="3"/>
      </svg>
      <div class="edit">编辑大屏</div>
      <p class="upd">最后更新时间：2020-10-17 17:18:47</p>
      <div class="steps"><p>大屏编辑步骤：</p><p>1. 点击“编辑大屏”按钮前往大屏编辑器</p><p>2. 在设备地图编辑器进行开发</p><p>3. 返回工作台，大屏组件将同步变更</p><p>4. 如果没有更新，点右上角“刷新”更新</p></div>
    </div>
    <a class="how">如何配置大屏</a>
  </aside>
</main>

<svg class="notes" viewBox="0 0 1913 970">
  <path d="M166 556 652 472M411 781 167 597" stroke="#f00" stroke-width="2.800" fill="none" stroke-linecap="round"/>
  <path fill="#f00" d="M664 470 650 478 652 472 648 467ZM157 588 171.500 592 166 596 163.500 602Z"/>
  <text x="315" y="514">第二步：拖入页面内</text><text x="425" y="788.500" textLength="241">第一步：挑选合适组件</text>
</svg>
</body>
</html>
```
FILE: styles.css
```css
* { box-sizing: border-box; }
body { margin: 0; width: 1913px; height: 970px; overflow: hidden; position: relative; display: flex; flex-direction: column; background: #f7f7f7; color: #333; font: 12px/16px "Liberation Sans", "Noto Sans CJK SC", sans-serif; }
p, h4, h5 { margin: 0; font-weight: normal; }
i, em { font-style: normal; }
svg { display: block; flex: none; }
.defs { position: absolute; width: 0; height: 0; }

/* top bar */
.topbar { height: 53px; flex: none; display: flex; border-top: 1px solid #d8d9de; border-bottom: 1px solid #dcdcdc; }
.burger { width: 16px; margin: 20px 19px 0 13px; display: flex; flex-direction: column; gap: 4px; }
.burger i { height: 2.500px; background: #ff6a00; }
.name { font: 14.500px/18px "Noto Sans CJK SC", sans-serif; color: #111; margin-top: 6px; }
.sub { color: #888; line-height: 16px; margin-top: 2px; }
.tools { margin-left: auto; display: flex; align-items: center; padding-right: 21px; }
.saved { color: #888; width: 110px; margin-right: 24px; white-space: nowrap; margin-top: -2px; font-size: 12.200px; }
.tool { width: 16px; height: 16px; margin-right: 28px; }
.tool:last-child { margin-right: 0; }
.sep { width: 1px; height: 28px; background: #d5d5d5; margin: 0 16px 0 -8px; }

.main { flex: 1; min-height: 0; display: flex; }
.rail { width: 45px; border-right: 1px solid #dfe1e6; }
.rail-item { height: 46px; display: flex; align-items: center; padding-left: 13px; }
.rail-item.on { background: #ebebeb; box-shadow: inset 1px 0 #0070cc; }
.rail-item svg { width: 16px; height: 16px; }
.rail-line { display: block; width: 22px; height: 1px; margin: 4px 0 4px 10px; background: #c8c8c8; }

/* component library */
.comps { width: 229px; display: flex; flex-direction: column; }
.comps-top { height: 104px; padding: 10px 13px 0 12px; flex: none; }
.comps-title { display: flex; justify-content: space-between; height: 26px; color: #222; }
.comps-title b { line-height: 17px; color: #111; }
label { display: flex; align-items: center; gap: 4px; }
.comps-title label { height: 18px; margin-right: 0; }
.cb { width: 12px; height: 12px; border: 1px solid #d5d5d5; background: #fff; display: block; }
.cb.on { border: 0; background: #0070cc; position: relative; }
.cb.on::after { content: ""; position: absolute; left: 4px; top: 2px; width: 3px; height: 5px; border: solid #fff; border-width: 0 1.500px 1.500px 0; transform: rotate(42deg); }
.field { height: 24px; border: 1px solid #d9d9d9; background: #fff; display: flex; align-items: center; }
.search { padding-left: 4px; gap: 7px; color: #888; }
.search svg { width: 13px; height: 13px; }
.select { margin-top: 8px; padding: 0 4px; justify-content: space-between; }
.select svg { width: 12px; height: 8px; }
.scroll { flex: 1; min-height: 0; display: flex; background: #f0f0f0; overflow: hidden; }
.list { width: 211px; background: #f7f7f7; }
.list h4 { height: 28px; line-height: 28px; background: #f0f0f0; padding-left: 19px; display: flex; align-items: center; gap: 11px; }
.list h4 i { width: 6px; height: 6px; border: solid #888; border-width: 0 1px 1px 0; transform: translate(1px, -2px) rotate(45deg); }
.grid { display: grid; grid-template-columns: repeat(3, 68px); grid-auto-rows: 70px; padding: 9px 0 8px 4px; }
.grid div { display: flex; flex-direction: column; align-items: center; padding-top: 14px; color: #555; white-space: nowrap; }
.grid svg { width: 23px; height: 23px; margin: -1px 1px 12px 0; }
.glyph { fill: #f7f7f7; text-anchor: middle; font-family: "Liberation Sans", sans-serif; font-weight: bold; }
.bar { width: 18px; padding: 7px 0 5px 2px; display: flex; flex-direction: column; }
.bar .up { width: 0; border: 3.500px solid transparent; border-top: 0; border-bottom: 4px solid #a0a0a0; margin: 0 0 6px 3px; }
.bar .thumb { width: 13px; height: 338px; background: #c1c1c1; }
.bar .down { width: 0; border: 3.500px solid transparent; border-bottom: 0; border-top: 4px solid #505050; margin: auto 0 1px 3px; }

/* workspace */
.work { width: 1360px; position: relative; display: flex; flex-direction: column; background: #dedede; border-right: 1px solid #dcdcdc; }
.hruler { height: 22px; margin-left: 22px; overflow: hidden; background: linear-gradient(90deg, #b3b3b3 2px, transparent 2px) 1px 14px / 9px 8px repeat-x, linear-gradient(90deg, #b3b3b3 2px, transparent 2px) 55px 0 / 90px 22px repeat-x; }
.hlabels { display: flex; margin-left: 55px; width: 1350px; }
.hlabels span { width: 90px; flex: none; padding-left: 4px; font-size: 10px; line-height: 12px; color: #666; }
.work-row { flex: 1; min-height: 0; display: flex; }
.vruler { width: 22px; padding: 26px 0 0 0; overflow: hidden; background: linear-gradient(#b3b3b3 2px, transparent 2px) 14px -1px / 8px 9px repeat-y, linear-gradient(#b3b3b3 2px, transparent 2px) 0 26px / 22px 90px repeat-y; }
.vruler span { display: block; writing-mode: vertical-rl; transform: rotate(180deg); height: 90px; width: 12px; line-height: 12px; font-size: 10px; color: #666; text-align: right; padding-bottom: 3px; }
.canvas { flex: 1; position: relative; overflow: visible; }
.page { position: absolute; left: 20px; top: 27px; width: 216px; height: 810px; background: #323232; box-shadow: 0 1px 0 #f2f2f2; }
.logo { height: 65px; padding: 18px 18px; font-size: 17.500px; line-height: 22px; color: #ff6a00; }
.menu { height: 43px; padding-left: 18px; line-height: 43px; background: #0064ff; color: #fff; font-size: 12.600px; }
.stage { position: absolute; left: 236px; top: 27px; width: 1087px; height: 818px; background: #101116; border: 1px solid #1465ae; border-top-color: #3a8bd3; padding: 8px 17px 0 17px; font-family: "Noto Sans", "Noto Sans CJK SC", sans-serif; color: #eee; }
.stage::before { content: ""; position: absolute; left: 9px; top: 4px; right: 9px; height: 602px; border: 1px solid #1f2227; }
.dash-head { position: relative; height: 43px; background: #1e242e; display: flex; align-items: center; margin-bottom: 2px; }
.radar { width: 28px; height: 28px; margin: 2px 0 0 12px; }
.dash-head strong { font: bold 19.300px/28px "Noto Sans CJK SC", sans-serif; color: #fff; margin-left: 10px; width: 194px; white-space: nowrap; margin-top: -1px; }
.matrix { width: 272px; height: 12px; margin: 0 97px 0 302px; }
.dash-head time { font-size: 9.500px; color: #8b9099; width: 92px; white-space: nowrap; margin-top: 7px; }
.full { width: 19px; height: 19px; margin-left: 11px; }
.dash-body { position: relative; display: grid; grid-template-columns: 227px 592px 226px; column-gap: 2px; height: 535px; }
.pan { background: #1e242e; height: 534px; }
.pan.right { margin: 0 -2px 0 2px; }
.pan-head { height: 32px; background: #253342; border-bottom: 1px solid #151a21; display: flex; align-items: center; padding: 0 14px 0 16px; font-weight: 500; font-size: 11.500px; color: #fff; }
.pan-head svg { width: 15px; height: 15px; }
.pan-head span { margin-left: 10px; }
.pan-head .deco { width: 58px; height: 12px; margin-left: auto; }
.right .pan-head { padding: 0 12px 0 14px; }
.right .pan-head span { margin-left: 11px; }
.sec { border-bottom: 1px solid #13171d; height: 55px; display: flex; }
.hero { height: 69px; justify-content: space-between; }
.stat { padding: 13px 0 0 14px; }
.hero .stat { padding-top: 14px; }
.right .stat { padding-left: 13px; }
.stat p { font: bold 8px/12px "Noto Sans CJK SC", sans-serif; color: #fff; white-space: nowrap; }
.hero p { font-size: 9px; }
.val { display: flex; align-items: baseline; margin-top: 2px; height: 14px; line-height: 14px; }
.val b { font: 500 18px/14px Roboto, sans-serif; color: #ffae00; width: 9px; transform: scaleX(.85); transform-origin: 0 50%; }
.val em { font-size: 9px; color: #858b95; line-height: 14px; white-space: pre; }
.two b { width: 17.500px; }
.hero .val { margin-top: 5px; height: 24px; }
.hero .val b { font-size: 28px; line-height: 24px; width: 14px; }
.hero .two b { width: 28px; }
.hero .val em { font-size: 12px; }
.low .stat { padding-top: 12px; }
.low .val { margin-top: 3px; }
.pair .stat:first-child { width: 113px; border-right: 1px solid #151a21; }
.pair .near, .right .near { padding-left: 9px; }
.ring { width: 41px; height: 42px; border-radius: 50%; border: 1px solid #39414b; margin: 15px 25px 0 0; text-align: center; }
.ring span, .ring small { display: block; font-size: 7px; line-height: 12px; font-weight: bold; margin-top: 8px; }
.ring small { font-size: 9px; margin-top: 1px; font-weight: normal; color: #9aa5b0; }
.chart, .rank, .active { height: 162px; flex-direction: column; }
.tabs { display: flex; justify-content: space-between; padding: 12px 14px 0 14px; font: 9px/14px "Noto Sans CJK SC", sans-serif; color: #59606b; white-space: nowrap; height: 31px; flex: none; }
.tabs .on { color: #fff; font-weight: bold; height: 19px; border-bottom: 2px solid #a87614; }
.right .tabs { padding: 12px 11px 0 14px; }
.unit { text-align: right; padding-right: 12px; font-size: 8px; line-height: 12px; height: 14px; color: #8b9099; }
.plot { width: 227px; height: 116px; overflow: visible; }
.right .plot { width: 226px; }
.chart .unit { margin-top: 1px; height: 13px; }
.ax text { font: 7.800px "Noto Sans", sans-serif; fill: #8391a0; text-anchor: middle; }
.ax.lite text { fill: #a9b0ba; }
.rank { padding: 10px 12px 0 14px; border: 0; }
.rank h5 { font: bold 9px/14px "Noto Sans CJK SC", sans-serif; width: 54px; white-space: nowrap; border-bottom: 1px solid #6a501c; padding-bottom: 1px; flex: none; }
.rank .unit { padding: 0; margin-top: 4px; height: 16px; flex: none; }
.rk { display: flex; align-items: center; height: 16px; margin-top: 0; font-size: 8px; flex: none; }
.rk small { width: 9px; font-size: 7px; }
.rk b { margin-left: auto; font-size: 10px; font-weight: normal; }
.track { height: 5.500px; background: #333942; flex: none; }
.track i { display: block; height: 100%; background: #ffae00; }
.active { border: 0; }
.active-head { display: flex; justify-content: space-between; align-items: flex-start; padding: 13px 11px 0 13px; height: 46px; line-height: 14px; font-size: 8px; color: #8b9099; flex: none; }
.active-head b { font-size: 9px; color: #fff; }
.dash-foot { position: relative; height: 12px; margin-top: 1px; background: #1c232d; padding: 2px 0 0 8px; }
.dash-foot svg { width: 80px; height: 8px; }
.foot-line { position: relative; display: block; height: 3px; margin-top: 2px; background: #1c232d; }

.map { display: grid; grid-template-rows: 535px; overflow: hidden; position: relative; }
.mapsvg { width: 592px; height: 535px; }
.borderline { fill: none; stroke: #0b131b; stroke-width: 2.500; }
.faint { stroke-width: 1.500; opacity: .6; }
.sea { fill: #3a424d; font-family: "Noto Sans CJK SC", sans-serif; }
.asia { fill: #848a96; font: 36px "Noto Sans CJK SC", sans-serif; }
.outer { fill: #34353a; stroke: #8c7a64; stroke-width: 4; }
.grey { fill: none; stroke: #a37718; stroke-width: 2; }
.prov { stroke: #8a8340; stroke-width: 1.500; }
.river { fill: none; stroke: #232c36; stroke-width: 1.500; opacity: .6; }
.dash { stroke: #b49a64; stroke-width: 3; fill: none; }
.dots { stroke: #b68419; stroke-width: 3; }
.lab text { font: bold 20.500px "Noto Sans CJK SC", sans-serif; fill: #eee; text-anchor: middle; }
.map-title { position: absolute; left: 20px; top: 13px; font: 11.500px/16px "Noto Sans CJK SC", sans-serif; color: #eee; }
.legend { position: absolute; left: 25px; top: 50px; display: flex; gap: 4px; }
.legend i { width: 9px; height: 54.500px; background: linear-gradient(#dca221 33%, #137a70 33% 66.500%, #135272 66.500%); }
.legend div { display: flex; flex-direction: column; gap: 10px; font-size: 8px; line-height: 10px; color: #999; padding-top: 2px; }
.legend span:nth-child(2) { margin-top: 3px; }
.legend span:nth-child(3) { margin-top: -2px; }
.scale { position: absolute; left: 1px; bottom: 3px; width: 47px; height: 9px; border: solid #777; border-width: 0 1px 1px 1px; display: flex; align-items: center; font-size: 7px; line-height: 8px; gap: 0; }
.scale i { width: 9px; height: 9px; background: radial-gradient(#2b8df0 35%, #d9f0ff 50%, #9bd37e); }
.scale span { background: #4a4f55; padding-right: 12px; line-height: 7px; white-space: nowrap; margin-left: -3px; }
.more { position: absolute; left: 486px; top: 512px; width: 87px; height: 15px; border: 1px solid #53595f; font-size: 7.500px; line-height: 13px; text-align: center; color: #999; white-space: nowrap; }

.hd { position: absolute; width: 8px; height: 8px; background: #fff; border: 1px solid #0070cc; }
.rot { position: absolute; left: 543px; top: -21px; width: 1.500px; height: 20px; background: #6aa8dc; }
.h0 { left: -5px; top: -5px; } .h1 { left: 539px; top: -5px; } .h2 { right: -5px; top: -5px; }
.h3 { left: -5px; top: 404px; } .h4 { right: -5px; top: 404px; }
.h5 { left: -5px; bottom: -5px; } .h6 { left: 539px; bottom: -5px; } .h7 { right: -5px; bottom: -5px; }
.h8 { left: 539px; top: -25px; }
.hscroll { position: absolute; left: 438px; top: 855px; width: 455px; height: 6px; border-radius: 3px; background: #bcc3cc; }
.vscroll { position: absolute; left: 1327px; top: 278px; width: 6px; height: 303px; border-radius: 3px; background: #bcc3cc; }
.fold { position: absolute; top: 459px; width: 12px; height: 25px; background: #f0f0f0; display: grid; place-items: center; }
.fold svg { width: 8px; height: 11px; }
.fold.l { left: 0; } .fold.r { right: 0; }
.status { height: 30px; flex: none; background: #f7f7f7; display: flex; align-items: center; padding: 1px 25px 0 20px; }
.view { margin-right: 20px; color: #333; }
.status label { margin-right: 25px; gap: 4px; color: #222; }
.fit { margin-left: auto; display: flex; gap: 5px; align-items: center; }
.fit svg { width: 14px; height: 14px; }
.zoomlab { margin: 0 10px 0 25px; }
.zoombar { width: 200px; height: 2px; margin-right: 26px; background: linear-gradient(90deg, #0070cc 32px, #c8c8c8 32px); position: relative; top: -1px; }
.zoombar i, .op i { position: absolute; left: 24px; top: -7px; width: 16px; height: 16px; border-radius: 50%; background: #fff; box-shadow: 0 1px 3px rgba(0, 0, 0, .15); }
.status .auto { margin: 0; }

/* style panel */
.style { width: 279px; display: flex; flex-direction: column; }
.style-tab { height: 36px; border-bottom: 2px solid #0070cc; text-align: center; padding-left: 5px; line-height: 34px; color: #0070cc; font-weight: bold; }
.aligns { height: 37px; display: flex; align-items: center; border-bottom: 1px solid #d5d5d5; padding-left: 13px; gap: 18px; }
.aligns svg { width: 14px; height: 14px; }
.aligns i { width: 2px; height: 10px; margin: 0 -6px 0 -6px; background: repeating-linear-gradient(#999 0 2px, transparent 2px 4px); }
.dims { padding: 10px 7px 0 12px; height: 79px; display: grid; grid-template-columns: repeat(3, 72px); justify-content: space-between; grid-auto-rows: 24px; row-gap: 10px; border-bottom: 1px solid #e6e6e6; }
.in { height: 24px; border: 1px solid #d9d9d9; background: #fff; padding: 0 6px 0 8px; display: flex; align-items: center; justify-content: space-between; line-height: 22px; }
.in em { color: #999; font-size: 13px; }
.in .deg { color: #333; margin: -4px -2px 0 0; }
.flips { display: flex; justify-content: space-between; }
.flips .in { width: 30px; padding: 0 8px; }
.flips svg { width: 12px; height: 12px; }
.props { height: 129px; padding: 10px 7px 0 12px; border-bottom: 1px solid #e6e6e6; }
.row { height: 36px; display: flex; align-items: center; }
.row > span { width: 119px; }
.wide { width: 141px; padding-left: 4px; }
.switch { width: 28px; height: 16px; border-radius: 8px; margin-left: auto; background: radial-gradient(circle at 20px 8px, #fff 6px, #0070cc 6.500px); }
.op { position: relative; width: 87px; height: 2px; background: #0070cc; margin-right: 12px; }
.op i { left: 79px; }
.pct { width: 42px; padding: 0 5px; }
.thumbs { padding: 0 7px 0 12px; }
.thumb-head { height: 48px; display: flex; align-items: center; padding-bottom: 3px; }
.thumb-head svg { width: 12px; height: 12px; margin-left: 8px; }
.thumb-head a { margin-left: auto; display: flex; align-items: center; gap: 4px; color: #0070cc; }
.thumbnail { width: 260px; height: 144px; }
.tt text { fill: #b9bec4; font-family: "Noto Sans CJK SC", sans-serif; }
.ty text { fill: #c99a24; font-family: "Noto Sans", sans-serif; }
.edit { margin-top: 12px; height: 32px; line-height: 32px; background: #0070cc; color: #fff; text-align: center; }
.upd { margin-top: 18px; color: #999; }
.steps { margin-top: 30px; color: #999; line-height: 28px; white-space: nowrap; }
.how { color: #0070cc; text-align: center; margin: auto 0 22px 5px; }

.notes { position: absolute; left: 0; top: 0; width: 1913px; height: 970px; pointer-events: none; }
.notes text { font: 24px "Noto Sans CJK SC", sans-serif; fill: #f00; stroke: #000; stroke-width: 3px; stroke-linejoin: round; paint-order: stroke; }
```
